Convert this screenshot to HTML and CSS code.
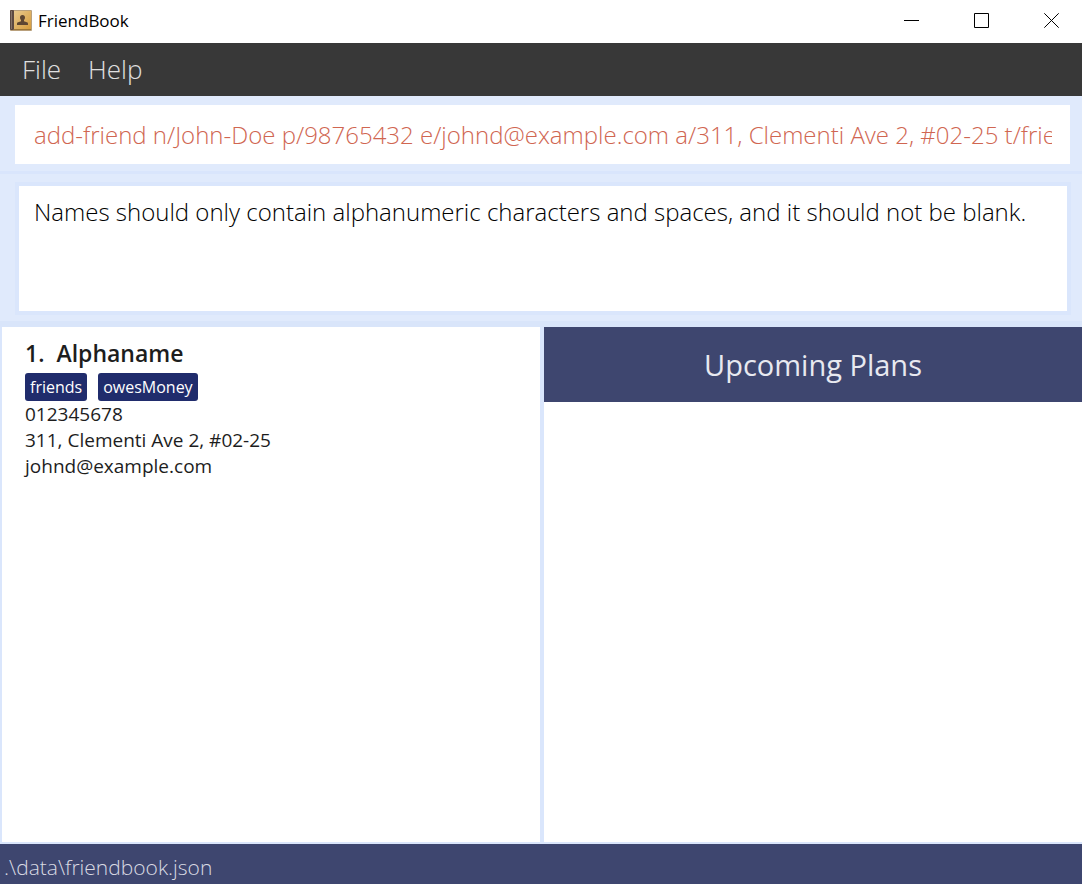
FILE: index.html
```
<!DOCTYPE html>
<html lang="en">
<head>
<meta charset="utf-8">
<meta name="viewport" content="width=device-width, initial-scale=1">
<title>FriendBook</title>
<link rel="stylesheet" href="styles.css">
</head>
<body>
<div class="window">
  <header class="titlebar">
    <svg class="app-icon" viewBox="0 0 22 21" aria-hidden="true">
      <defs>
        <linearGradient id="cover" x1="0" y1="0" x2="1" y2="1">
          <stop offset="0" stop-color="#e9c98f"/>
          <stop offset="1" stop-color="#d79d3c"/>
        </linearGradient>
      </defs>
      <rect x="0" y="0" width="22" height="21" rx="1" fill="#b9a07c"/>
      <rect x="0" y="0" width="4" height="20" rx="1" fill="#5d4a42"/>
      <rect x="1" y="1" width="1" height="18" fill="#85736a"/>
      <rect x="4" y="1" width="17" height="18" fill="url(#cover)"/>
      <rect x="4" y="19" width="17" height="1" fill="#9c7637"/>
      <path d="M12.500 5c1.700 0 2.500 1 2.500 2.500 0 1.200-.5 2-1 2.500v1.200l3.500 1.300c.4.200.5.500.5 2.500H7c0-2 .1-2.300.5-2.500l3.500-1.300V10c-.5-.5-1-1.300-1-2.500C10 6 10.800 5 12.500 5z" fill="#5e4632"/>
    </svg>
    <h1 class="app-name">FriendBook</h1>
    <div class="window-controls">
      <button class="control" type="button" aria-label="Minimize"><svg viewBox="0 0 15 15"><path d="M0 7.500h15"/></svg></button>
      <button class="control" type="button" aria-label="Maximize"><svg viewBox="0 0 15 15"><path d="M.5.5h14v14H.5z"/></svg></button>
      <button class="control" type="button" aria-label="Close"><svg viewBox="0 0 15 15"><path d="M.3.3l14.400 14.400M14.700.3L.3 14.700"/></svg></button>
    </div>
  </header>

  <nav class="menubar">
    <button class="menu" type="button">File</button>
    <button class="menu" type="button">Help</button>
  </nav>

  <div class="command">
    <input class="command-input" type="text" aria-label="Command" spellcheck="false" value="add-friend n/John-Doe p/98765432 e/johnd@example.com a/311, Clementi Ave 2, #02-25 t/friends t/owesMoney">
  </div>

  <div class="result">
    <textarea class="result-text" aria-label="Result" rows="3" spellcheck="false" readonly>Names should only contain alphanumeric characters and spaces, and it should not be blank.</textarea>
  </div>

  <main class="panels">
    <section class="friends" aria-label="Friends">
      <article class="friend">
        <h2 class="friend-name"><span>1.</span><span>Alphaname</span></h2>
        <div class="tags"><span class="tag">friends</span><span class="tag">owesMoney</span></div>
        <p class="detail">012345678</p>
        <p class="detail">311, Clementi Ave 2, #02-25</p>
        <p class="detail">johnd@example.com</p>
      </article>
    </section>
    <section class="plans">
      <h2 class="plans-title">Upcoming Plans</h2>
    </section>
  </main>

  <footer class="statusbar">.\data\friendbook.json</footer>
</div>
</body>
</html>
```

FILE: styles.css
```
* {
  box-sizing: border-box;
}

body {
  margin: 0;
  font-family: "Open Sans", "Noto Sans", sans-serif;
  color: #1d1d1d;
}

h1, h2, p {
  margin: 0;
}

button, input, textarea {
  font: inherit;
  border: 0;
  border-radius: 0;
  outline: 0;
}

.window {
  display: flex;
  flex-direction: column;
  min-height: 100vh;
  background: #e0eafc;
}

.titlebar {
  display: flex;
  align-items: center;
  gap: 6px;
  height: 43px;
  padding-left: 10px;
  padding-bottom: 2px;
  background: #fff;
}

.app-icon {
  width: 22px;
  height: 21px;
}

.app-name {
  font-size: 17px;
  font-weight: 400;
  color: #000;
}

.window-controls {
  display: flex;
  align-self: stretch;
  margin-left: auto;
}

.control {
  display: flex;
  align-items: center;
  justify-content: center;
  width: 70px;
  padding: 0 0 0 8px;
  background: none;
}

.control svg {
  width: 15px;
  height: 15px;
  fill: none;
  stroke: #000;
  stroke-width: 1;
}

.menubar {
  display: flex;
  gap: 27px;
  height: 53px;
  padding: 0 22px 2px;
  background: #383838;
}

.menu {
  padding: 0;
  background: none;
  color: #e0e0e0;
  font-size: 26px;
  font-weight: 300;
}

.command {
  padding: 9px 12px 7px 15px;
  border-bottom: 3px solid #d9e5fc;
}

.command-input {
  display: block;
  width: 100%;
  height: 59px;
  padding: 0 18px 0 19px;
  background: #fff;
  color: #d06651;
  font-size: 24px;
  font-weight: 300;
}

.result {
  padding: 8px 11px 6px 15px;
  border-bottom: 6px solid #d9e5fa;
}

.result-text {
  display: block;
  width: 100%;
  height: 133px;
  padding: 9px 15px;
  border: 4px solid #dae6fc;
  background: #fff;
  color: #000;
  font-size: 24px;
  font-weight: 300;
  line-height: 34px;
  resize: none;
  overflow: hidden;
}

.panels {
  flex: 1;
  display: grid;
  grid-template-columns: 1fr 1fr;
  gap: 4px;
  padding: 0 0 2px 2px;
  background: #dae6fc;
}

.friends, .plans {
  background: #fff;
}

.friend {
  padding: 9px 23px;
}

.friend-name {
  display: flex;
  gap: 12px;
  font-size: 23px;
  line-height: 34px;
  font-weight: 600;
}

.tags {
  display: flex;
  gap: 11px;
  padding-top: 3px;
}

.tag {
  padding: 0 5px;
  border-radius: 3px;
  background: #202c6c;
  color: #fff;
  font-size: 16px;
  line-height: 28px;
  font-weight: 500;
}

.detail {
  font-size: 19px;
  line-height: 26px;
}

.plans-title {
  padding: 18px;
  background: #3e466f;
  color: #e8e9f0;
  font-size: 29px;
  line-height: 39px;
  font-weight: 400;
  text-align: center;
}

.statusbar {
  height: 40px;
  padding: 4px 4px 0;
  background: #3e466f;
  color: #d9dae3;
  font-size: 21px;
  line-height: 38px;
  font-weight: 300;
}
```
